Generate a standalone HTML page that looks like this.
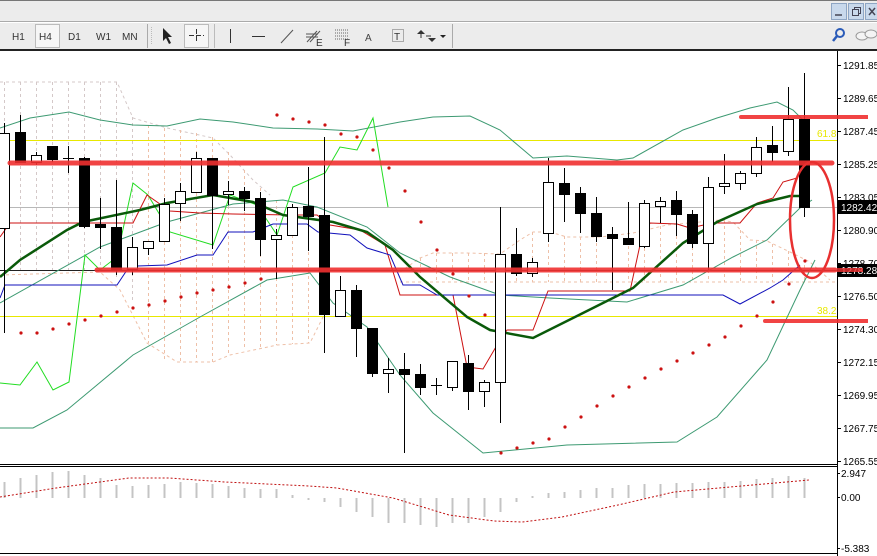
<!DOCTYPE html>
<html><head><meta charset="utf-8"><style>
body{margin:0;width:877px;height:556px;overflow:hidden;background:#fff;font-family:"Liberation Sans",sans-serif;}
svg{display:block}
text{font-family:"Liberation Sans",sans-serif;font-size:10px}
</style></head><body>
<svg width="877" height="556" viewBox="0 0 877 556" xmlns="http://www.w3.org/2000/svg">
<rect x="0" y="0" width="877" height="50" fill="#ececec"/>
<line x1="0" y1="0.5" x2="877" y2="0.5" stroke="#777"/>
<line x1="0" y1="21.5" x2="877" y2="21.5" stroke="#aaa"/>
<line x1="0" y1="22.5" x2="877" y2="22.5" stroke="#fff"/>
<rect x="0" y="49" width="877" height="2" fill="#222"/>
<g fill="#c9d9ec" stroke="#8fa6c4">
<rect x="831.5" y="3.5" width="15" height="16"/><rect x="848.5" y="3.5" width="15" height="16"/><rect x="865.5" y="3.5" width="15" height="16"/>
</g>
<line x1="835" y1="15" x2="842" y2="15" stroke="#445" stroke-width="1.5"/>
<rect x="852.5" y="9.5" width="6" height="6" fill="none" stroke="#445"/><path d="M854.5 9.5V7.5H860.5V13.5H858.5" fill="none" stroke="#445"/>
<path d="M869 8l6 7M875 8l-6 7" stroke="#445" stroke-width="1.5"/>
<g fill="#333">
<text x="12" y="40">H1</text><text x="68" y="40">D1</text><text x="96" y="40">W1</text><text x="122" y="40">MN</text>
</g>
<rect x="35.5" y="24.5" width="24" height="23" fill="#f6f6f6" stroke="#bbb"/><text x="39" y="40" fill="#333">H4</text>
<line x1="147.5" y1="24" x2="147.5" y2="48" stroke="#aaa"/>
<line x1="151.5" y1="27" x2="151.5" y2="45" stroke="#bbb" stroke-dasharray="1 1"/>
<path d="M163 28v13l3-3 3 6 2-1-3-6h4z" fill="#222"/>
<rect x="184.5" y="24.5" width="24" height="23" fill="#f6f6f6" stroke="#bbb"/>
<path d="M196.5 29v14M189 35.5h15" stroke="#333" stroke-dasharray="5 2"/>
<line x1="214.5" y1="24" x2="214.5" y2="48" stroke="#bbb"/>
<line x1="230.5" y1="29" x2="230.5" y2="43" stroke="#333"/>
<line x1="252" y1="36.5" x2="265" y2="36.5" stroke="#333"/>
<line x1="281" y1="43" x2="293" y2="30" stroke="#555"/>
<path d="M307 42l10-11M310 42l10-11M306 37h12M306 34h12" stroke="#555"/><text x="316" y="46" font-size="7" fill="#333">E</text>
<path d="M335 30h14M335 33h14M335 36h14M335 39h14" stroke="#666" stroke-dasharray="1 1"/><text x="344" y="46" font-size="7" fill="#333">F</text>
<text x="365" y="41" font-size="13" fill="#444">A</text>
<rect x="392.5" y="29.5" width="11" height="12" fill="none" stroke="#666" stroke-dasharray="1 1"/><text x="394" y="40" font-size="10" fill="#333">T</text>
<path d="M421 30l4 4h-8zM428 38l4 4 4-4z" fill="#333"/><path d="M421 34v4M426 36h5" stroke="#333"/>
<path d="M440 35h6l-3 3z" fill="#222"/>
<line x1="452.5" y1="24" x2="452.5" y2="48" stroke="#aaa"/>
<circle cx="840" cy="33" r="4" fill="none" stroke="#2a5bb8" stroke-width="2"/><line x1="837" y1="36" x2="833" y2="41" stroke="#2a5bb8" stroke-width="2.5"/>
<ellipse cx="862" cy="36" rx="6" ry="4" fill="#f4f4f4" stroke="#999"/><ellipse cx="871" cy="34" rx="6" ry="4" fill="#f4f4f4" stroke="#999"/>
<rect x="0" y="51" width="877" height="505" fill="#fff"/>
<line x1="837.5" y1="51" x2="837.5" y2="556" stroke="#000"/>
<line x1="0" y1="464.5" x2="837" y2="464.5" stroke="#000"/>
<line x1="0" y1="466.5" x2="837" y2="466.5" stroke="#000"/>
<line x1="0" y1="553.5" x2="837" y2="553.5" stroke="#000"/>
<defs><clipPath id="c"><rect x="0" y="51" width="837" height="413"/></clipPath></defs>
<g clip-path="url(#c)">
<g stroke="#d4c8c8" stroke-dasharray="3 3" fill="none">
<path d="M0 82H117L133 118L167 128L213 138L230 155L253 180L270 195"/>
<path d="M4.5 82V275M20.5 82V272M36.5 82V271M52.5 82V271M68.5 82V271M84.5 82V272M100.5 82V272M116.5 82V280M132.5 117V300"/>
</g>
<g stroke="#eec0a8" stroke-dasharray="3 3" fill="none">
<path d="M0 275L100 272L120 290L147 343L177 362L213 362L230 355L277 345L310 343L323 317L330 290"/>
<path d="M148.5 125V343M164.5 128V360M180.5 130V362M196.5 133V362M212.5 137V362M228.5 152V356M244.5 170V350M260.5 188V348M276.5 200V345M292.5 205V344M308.5 210V343"/>
<path d="M400 272L420 258L433 253L467 253L500 254L520 240L533 232L550 232L567 237L600 237L633 233L667 225L700 222L720 220L733 222L750 240L767 241L790 252L810 262L830 280"/>
<path d="M400 282H837"/>
<path d="M420.5 258V282M436.5 253V282M452.5 253V282M468.5 253V282M484.5 253V282M500.5 254V282M516.5 242V282M532.5 232V282M548.5 232V282M564.5 236V282M580.5 237V282M596.5 237V282M612.5 236V282M628.5 234V282M644.5 230V282M660.5 226V282M676.5 224V282M692.5 223V282M708.5 222V282M724.5 220V282M740.5 230V282M756.5 240V282M772.5 244V282M788.5 251V282M804.5 265V282"/>
</g>
<line x1="0" y1="140.5" x2="837" y2="140.5" stroke="#e8e800"/>
<line x1="0" y1="316.5" x2="837" y2="316.5" stroke="#e8e800"/>
<line x1="0" y1="207.5" x2="837" y2="207.5" stroke="#b8b8b8"/>
<line x1="0" y1="270.5" x2="837" y2="270.5" stroke="#222"/>
<text x="817" y="137" fill="#e8e800" font-size="10">61.8</text>
<text x="817" y="314" fill="#e8e800" font-size="10">38.2</text>
<g fill="none" stroke="#3d9a72" stroke-width="1">
<path d="M0 128L30 118L69 112L100 120L133 125L167 126L200 119L233 122L273 128L317 129L353 131L400 122L433 117L470 116L500 130L533 158L567 156L617 160L633 158L683 130L717 118L750 108L777 102L793 110L805 122"/>
<path d="M0 303L100 247L167 222L233 204L283 200L317 207L367 227L400 253L450 277L500 295L550 298L627 302L683 285L733 257L767 240L800 208L812 200"/>
<path d="M0 428L33 428L67 410L133 355L200 317L267 280L310 273L333 303L367 327L400 375L433 413L483 453L567 445L677 442L717 417L767 360L800 290L815 260"/>
</g>
<path d="M0 383L20 385L37 362L53 390L69 382L85 255L100 270L117 257L133 183L148 195L170 232L213 245L230 195L257 205L277 235L293 187L325 173L340 147L357 150L373 118L388 207" fill="none" stroke="#22dd22"/>
<path d="M0 237L10 223L133 223L147 195L170 211L200 213L233 214L290 215L317 215L330 225L360 230L385 245L400 295L453 295L467 367L483 369L500 340L507 330L533 330L548 291L630 291L640 245L650 223L677 224L690 228L713 223L740 223L757 203L773 198L783 182L797 178" fill="none" stroke="#cc1111"/>
<path d="M0 298L5 285L117 285L127 270L137 266L167 265L197 255L213 255L228 232L253 232L273 224L307 224L318 232L350 235L367 248L390 255L403 285L420 285L437 295L723 295L740 304L770 288L783 280L800 265" fill="none" stroke="#1111bb"/>
<path d="M0 277L20 260L67 230L83 222L140 210L167 203L213 195L253 202L283 215L333 222L367 232L393 250L420 277L467 317L490 330L533 338L583 313L633 288L683 243L717 222L757 204L790 196L800 196" fill="none" stroke="#0a5a0a" stroke-width="2.5"/>
<g fill="#cc1111">
<circle cx="21" cy="333" r="1.6"/><circle cx="37" cy="333" r="1.6"/><circle cx="53" cy="329" r="1.6"/><circle cx="69" cy="324" r="1.6"/><circle cx="85" cy="320" r="1.6"/><circle cx="101" cy="316" r="1.6"/><circle cx="117" cy="312" r="1.6"/><circle cx="133" cy="308" r="1.6"/><circle cx="149" cy="305" r="1.6"/><circle cx="165" cy="301" r="1.6"/><circle cx="181" cy="297" r="1.6"/><circle cx="197" cy="293" r="1.6"/><circle cx="213" cy="290" r="1.6"/><circle cx="229" cy="287" r="1.6"/><circle cx="245" cy="283" r="1.6"/><circle cx="261" cy="279" r="1.6"/>
<circle cx="277" cy="115" r="1.6"/><circle cx="293" cy="119" r="1.6"/><circle cx="309" cy="122" r="1.6"/><circle cx="325" cy="125" r="1.6"/><circle cx="341" cy="134" r="1.6"/><circle cx="357" cy="137" r="1.6"/><circle cx="373" cy="150" r="1.6"/><circle cx="389" cy="168" r="1.6"/><circle cx="405" cy="191" r="1.6"/><circle cx="421" cy="222" r="1.6"/><circle cx="437" cy="250" r="1.6"/><circle cx="453" cy="274" r="1.6"/><circle cx="469" cy="296" r="1.6"/><circle cx="485" cy="315" r="1.6"/>
<circle cx="501" cy="453" r="1.6"/><circle cx="517" cy="448" r="1.6"/><circle cx="533" cy="443" r="1.6"/><circle cx="549" cy="439" r="1.6"/><circle cx="565" cy="427" r="1.6"/><circle cx="581" cy="417" r="1.6"/><circle cx="597" cy="406" r="1.6"/><circle cx="613" cy="396" r="1.6"/><circle cx="629" cy="387" r="1.6"/><circle cx="645" cy="378" r="1.6"/><circle cx="661" cy="369" r="1.6"/><circle cx="677" cy="361" r="1.6"/><circle cx="693" cy="353" r="1.6"/><circle cx="709" cy="345" r="1.6"/><circle cx="725" cy="337" r="1.6"/><circle cx="741" cy="326" r="1.6"/><circle cx="757" cy="316" r="1.6"/><circle cx="773" cy="302" r="1.6"/><circle cx="789" cy="284" r="1.6"/><circle cx="805" cy="261" r="1.6"/>
</g>
<g stroke="#000" stroke-width="1">
<path d="M4.5 123V333M20.5 115V162M36.5 152V165M52.5 146V162M68.5 146V173M84.5 157V228M100.5 198V249M116.5 180V275M132.5 237V275M148.5 241V255M164.5 198V241M180.5 183V221M196.5 152V192M212.5 158V249M228.5 181V205M244.5 187V211M260.5 192V256M276.5 229V279M292.5 204V236M308.5 167V251M324.5 137V353M340.5 276V316M356.5 285V357M372.5 328V377M388.5 358V393M404.5 353V453M420.5 364V395M436.5 378V395M452.5 361V391M468.5 355V410M484.5 380V407M500.5 207V423M516.5 228V276M532.5 258V277M548.5 158V242M564.5 168V222M580.5 187V233M596.5 197V242M612.5 227V290M628.5 202V245M644.5 200V248M660.5 197V223M676.5 191V236M692.5 210V248M708.5 177V270M724.5 154V194M740.5 171V190M756.5 137V177M772.5 126V162M788.5 87V156M804.5 73V217"/>
<path d="M63 158.5h11M431 385.5h11"/>
</g>
<g stroke="#000" stroke-width="1">
<g fill="#fff">
<rect x="-0.5" y="133.5" width="10" height="95"/><rect x="31.5" y="155.5" width="10" height="7"/><rect x="127.5" y="247.5" width="10" height="22"/><rect x="143.5" y="241.5" width="10" height="7"/><rect x="159.5" y="204.5" width="10" height="37"/><rect x="175.5" y="191.5" width="10" height="12"/><rect x="191.5" y="158.5" width="10" height="34"/><rect x="223.5" y="191.5" width="10" height="3"/><rect x="271.5" y="235.5" width="10" height="4"/><rect x="287.5" y="207.5" width="10" height="28"/><rect x="335.5" y="290.5" width="10" height="26"/><rect x="383.5" y="369.5" width="10" height="4"/><rect x="447.5" y="361.5" width="10" height="26"/><rect x="479.5" y="382.5" width="10" height="9"/><rect x="495.5" y="254.5" width="10" height="128"/><rect x="527.5" y="262.5" width="10" height="11"/><rect x="543.5" y="182.5" width="10" height="51"/><rect x="639.5" y="203.5" width="10" height="43"/><rect x="655.5" y="201.5" width="10" height="5"/><rect x="703.5" y="187.5" width="10" height="56"/><rect x="719.5" y="183.5" width="10" height="3"/><rect x="735.5" y="173.5" width="10" height="10"/><rect x="751.5" y="147.5" width="10" height="26"/><rect x="783.5" y="119.5" width="10" height="32"/>
</g>
<g fill="#000">
<rect x="15.5" y="132.5" width="10" height="30"/><rect x="47.5" y="146.5" width="10" height="13"/><rect x="79.5" y="158.5" width="10" height="68"/><rect x="95.5" y="224.5" width="10" height="3"/><rect x="111.5" y="227.5" width="10" height="42"/><rect x="207.5" y="158.5" width="10" height="37"/><rect x="239.5" y="191.5" width="10" height="7"/><rect x="255.5" y="198.5" width="10" height="41"/><rect x="303.5" y="206.5" width="10" height="10"/><rect x="319.5" y="215.5" width="10" height="99"/><rect x="351.5" y="290.5" width="10" height="38"/><rect x="367.5" y="328.5" width="10" height="45"/><rect x="399.5" y="369.5" width="10" height="5"/><rect x="415.5" y="374.5" width="10" height="13"/><rect x="463.5" y="363.5" width="10" height="28"/><rect x="511.5" y="254.5" width="10" height="19"/><rect x="559.5" y="183.5" width="10" height="11"/><rect x="575.5" y="193.5" width="10" height="20"/><rect x="591.5" y="213.5" width="10" height="23"/><rect x="607.5" y="234.5" width="10" height="4"/><rect x="623.5" y="238.5" width="10" height="6"/><rect x="671.5" y="200.5" width="10" height="14"/><rect x="687.5" y="214.5" width="10" height="29"/><rect x="767.5" y="145.5" width="10" height="7"/><rect x="799.5" y="119.5" width="10" height="88"/>
</g></g>
<g stroke="#f03030" stroke-opacity="0.9" stroke-linecap="round">
<line x1="10" y1="163" x2="832" y2="163" stroke-width="5"/>
<line x1="97" y1="270" x2="835" y2="270" stroke-width="5"/>
<line x1="741" y1="117" x2="868" y2="117" stroke-width="4"/>
<line x1="765" y1="321" x2="868" y2="321" stroke-width="4"/>
</g>
<ellipse cx="812" cy="220" rx="22" ry="58" fill="none" stroke="#e83030" stroke-width="2.5"/>
</g>
<g stroke="#f03030" stroke-opacity="0.9">
<line x1="837" y1="117" x2="868" y2="117" stroke-width="4"/>
<line x1="837" y1="321" x2="868" y2="321" stroke-width="4"/>
</g>
<g fill="#000" font-size="9.5">
<text x="843" y="69">1291.85</text><text x="843" y="102">1289.65</text><text x="843" y="135">1287.45</text><text x="843" y="168">1285.25</text><text x="843" y="201">1283.05</text><text x="843" y="234">1280.90</text><text x="843" y="267">1278.70</text><text x="843" y="300">1276.50</text><text x="843" y="333">1274.30</text><text x="843" y="366">1272.15</text><text x="843" y="399">1269.95</text><text x="843" y="432">1267.75</text><text x="843" y="465">1265.55</text>
<text x="841" y="477">2.947</text><text x="841" y="501">0.00</text><text x="841" y="552">-5.383</text>
</g>
<g stroke="#000"><path d="M837 65.5h4M837 98.5h4M837 131.5h4M837 164.5h4M837 197.5h4M837 230.5h4M837 263.5h4M837 296.5h4M837 329.5h4M837 362.5h4M837 395.5h4M837 428.5h4M837 461.5h4M837 473.5h3M837 497.5h3M837 548.5h3"/></g>
<rect x="838" y="200" width="39" height="14" fill="#000"/><text x="841" y="211" fill="#fff">1282.42</text>
<rect x="838" y="264" width="39" height="13" fill="#000"/><text x="841" y="274" fill="#fff">1278.28</text>
<line x1="837" y1="270" x2="863" y2="270" stroke="#f03030" stroke-width="4" stroke-opacity="0.8"/>
<g stroke="#c4c4c4" stroke-width="2">
<path d="M4.5 498V482M20.5 498V478M36.5 498V475M52.5 498V472M68.5 498V471M84.5 498V475M100.5 498V478M116.5 498V485M132.5 498V486M148.5 498V485M164.5 498V484M180.5 498V482M196.5 498V483M212.5 498V484M228.5 498V486M244.5 498V488M260.5 498V489M276.5 498V489M292.5 498V495M308.5 498V500M324.5 498V502M340.5 498V507M356.5 498V512M372.5 498V517M388.5 498V523M404.5 498V523M420.5 498V525M436.5 498V527M452.5 498V523M468.5 498V523M484.5 498V517M500.5 498V512M516.5 498V502M532.5 498V496M548.5 498V493M564.5 498V492M580.5 498V490M596.5 498V488M612.5 498V488M628.5 498V485M644.5 498V484M660.5 498V484M676.5 498V483M692.5 498V483M708.5 498V482M724.5 498V482M740.5 498V481M756.5 498V479M772.5 498V478M788.5 498V476M804.5 498V478"/>
</g>
<path d="M0 497L56 488L129 478L169 478L225 482L309 486L337 488L393 498L449 515L494 521L522 522L562 517L618 505L674 492L730 487L809 480" fill="none" stroke="#c01010" stroke-dasharray="2 2"/>
</svg>
</body></html>
